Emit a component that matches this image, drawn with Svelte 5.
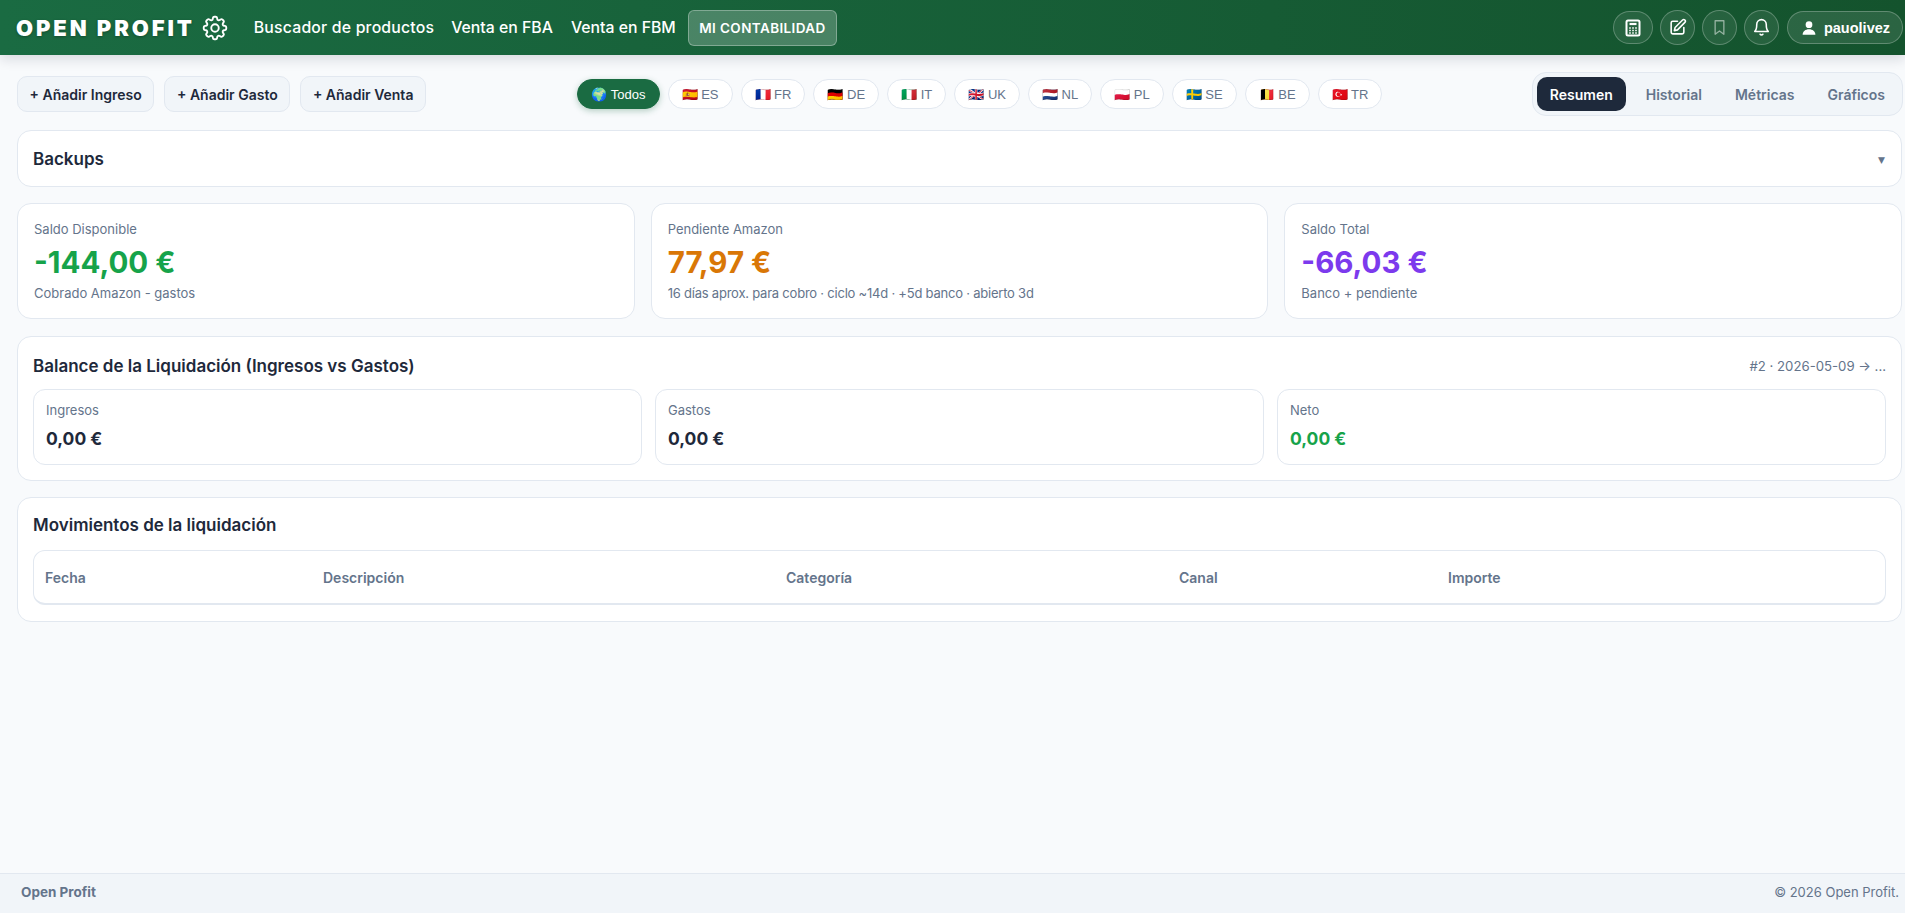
<script>
  const flags = [
    ['🇪🇸', 'ES'], ['🇫🇷', 'FR'], ['🇩🇪', 'DE'], ['🇮🇹', 'IT'], ['🇬🇧', 'UK'],
    ['🇳🇱', 'NL'], ['🇵🇱', 'PL'], ['🇸🇪', 'SE'], ['🇧🇪', 'BE'], ['🇹🇷', 'TR']
  ];
  const tabs = ['Resumen', 'Historial', 'Métricas', 'Gráficos'];
  const stats = [
    { label: 'Saldo Disponible', value: '-144,00 €', sub: 'Cobrado Amazon - gastos', cls: 'green', tight: false },
    { label: 'Pendiente Amazon', value: '77,97 €', sub: '16 días aprox. para cobro · ciclo ~14d · +5d banco · abierto 3d', cls: 'orange', tight: true },
    { label: 'Saldo Total', value: '-66,03 €', sub: 'Banco + pendiente', cls: 'purple', tight: false }
  ];
  const balance = [
    { label: 'Ingresos', value: '0,00 €', cls: '' },
    { label: 'Gastos', value: '0,00 €', cls: '' },
    { label: 'Neto', value: '0,00 €', cls: 'green' }
  ];
</script>

<div class="page">
  <header class="top">
    <div class="brand">OPEN PROFIT</div>
    <svg class="gear" viewBox="0 0 24 24" fill="none" stroke="currentColor" stroke-width="1.5" stroke-linecap="round" stroke-linejoin="round"><path d="M10.343 3.94c.09-.542.56-.94 1.11-.94h1.093c.55 0 1.02.398 1.11.94l.149.894c.07.424.384.764.78.93.398.164.855.142 1.205-.108l.737-.527a1.125 1.125 0 0 1 1.45.12l.773.774c.39.389.44 1.002.12 1.45l-.527.737c-.25.35-.272.806-.107 1.204.165.397.505.71.93.78l.893.15c.543.09.94.559.94 1.109v1.094c0 .55-.397 1.02-.94 1.11l-.894.149c-.424.07-.764.383-.929.78-.165.398-.143.854.107 1.204l.527.738c.32.447.269 1.06-.12 1.45l-.774.773a1.125 1.125 0 0 1-1.449.12l-.738-.527c-.35-.25-.806-.272-1.203-.107-.398.165-.71.505-.781.929l-.149.894c-.09.542-.56.94-1.11.94h-1.094c-.55 0-1.019-.398-1.11-.94l-.148-.894c-.071-.424-.384-.764-.781-.93-.398-.164-.854-.142-1.204.108l-.738.527c-.447.32-1.06.269-1.45-.12l-.773-.774a1.125 1.125 0 0 1-.12-1.45l.527-.737c.25-.35.272-.806.108-1.204-.165-.397-.506-.71-.93-.78l-.894-.15c-.542-.09-.94-.56-.94-1.109v-1.094c0-.55.398-1.02.94-1.11l.894-.149c.424-.07.765-.383.93-.78.165-.398.143-.854-.108-1.204l-.526-.738a1.125 1.125 0 0 1 .12-1.45l.773-.773a1.125 1.125 0 0 1 1.45-.12l.737.527c.35.25.807.272 1.204.107.397-.165.71-.505.78-.929l.15-.894Z"/><circle cx="12" cy="12" r="3"/></svg>
    <nav class="nav">
      <span class="nav-first">Buscador de productos</span>
      <span>Venta en FBA</span>
      <span>Venta en FBM</span>
      <span class="nav-active">MI CONTABILIDAD</span>
    </nav>
    <div class="actions">
      <span class="act calc">
        <svg viewBox="0 0 24 24" fill="none" stroke="currentColor" stroke-width="2" stroke-linecap="round" stroke-linejoin="round"><rect x="5.500" y="4.500" width="13" height="15" rx="1.500"/><path d="M8.500 8h7" stroke-width="2.200" stroke-linecap="butt"/><path d="M9 12h.01M12 12h.01M15 12h.01M9 14.500h.01M12 14.500h.01M15 14.500h.01M9 17h.01M12 17h.01M15 17h.01" stroke-width="1.600" stroke-linecap="square"/></svg>
      </span>
      <span class="act">
        <svg viewBox="0 0 24 24" fill="none" stroke="currentColor" stroke-width="2" stroke-linecap="round" stroke-linejoin="round"><path d="M12 4H6a2 2 0 0 0-2 2v12a2 2 0 0 0 2 2h12a2 2 0 0 0 2-2v-6"/><path d="M18.400 2.600a2 2 0 0 1 2.900 2.900L12 15l-4 1 1-4Z"/></svg>
      </span>
      <span class="act dim">
        <svg viewBox="0 0 24 24" fill="none" stroke="currentColor" stroke-width="1.700" stroke-linecap="round" stroke-linejoin="round"><path d="M6.500 3.500h11v17L12 16.500l-5.500 4Z"/></svg>
      </span>
      <span class="act">
        <svg viewBox="0 0 24 24" fill="none" stroke="currentColor" stroke-width="2" stroke-linecap="round" stroke-linejoin="round"><path d="M6 8a6 6 0 0 1 12 0c0 7 2.500 9 2.500 9h-17S6 15 6 8"/><path d="M10.300 20.500a2 2 0 0 0 3.400 0"/></svg>
      </span>
      <span class="user">
        <svg viewBox="0 0 24 24" fill="currentColor"><circle cx="12" cy="7.500" r="4.500"/><path d="M3.500 21c0-4.700 3.800-7.500 8.500-7.500s8.500 2.800 8.500 7.500Z"/></svg>
        pauolivez
      </span>
    </div>
  </header>

  <main class="main">
    <div class="toolbar">
      <div class="adds">
        <button>+ Añadir Ingreso</button>
        <button>+ Añadir Gasto</button>
        <button>+ Añadir Venta</button>
      </div>
      <div class="flags">
        <span class="flag on">🌍 Todos</span>
        {#each flags as f}
          <span class="flag">{f[0]} {f[1]}</span>
        {/each}
      </div>
      <div class="tabs">
        {#each tabs as t, i}
          <span class="tab" class:active={i === 0}>{t}</span>
        {/each}
      </div>
    </div>

    <section class="card backups">
      <h2>Backups</h2>
      <span class="caret">▼</span>
    </section>

    <div class="stats">
      {#each stats as s}
        <div class="card stat">
          <div class="stat-label">{s.label}</div>
          <div class="stat-value {s.cls}">{s.value}</div>
          <div class="stat-sub" class:tight={s.tight}>{s.sub}</div>
        </div>
      {/each}
    </div>

    <section class="card panel">
      <div class="panel-head">
        <h2>Balance de la Liquidación (Ingresos vs Gastos)</h2>
        <span class="period">#2 · 2026-05-09 → ...</span>
      </div>
      <div class="balance">
        {#each balance as b}
          <div class="mini">
            <div class="mini-label">{b.label}</div>
            <div class="mini-value {b.cls}">{b.value}</div>
          </div>
        {/each}
      </div>
    </section>

    <section class="card panel moves">
      <h2>Movimientos de la liquidación</h2>
      <div class="table-wrap">
        <table>
          <thead>
            <tr>
              <th class="c1">Fecha</th>
              <th class="c2">Descripción</th>
              <th class="c3">Categoría</th>
              <th class="c4">Canal</th>
              <th class="c5">Importe</th>
            </tr>
          </thead>
        </table>
      </div>
    </section>
  </main>

  <footer class="foot">
    <span class="foot-brand">Open Profit</span>
    <span class="foot-copy">© 2026 Open Profit.</span>
  </footer>
</div>

<style>
  :global(body) {
    margin: 0;
    background: #f8fafc;
    color: #1e293b;
    font-family: Inter, "Noto Sans", sans-serif;
  }
  .page {
    min-height: 913px;
    display: flex;
    flex-direction: column;
    box-sizing: border-box;
  }
  .top {
    height: 55px;
    box-sizing: border-box;
    display: flex;
    align-items: center;
    padding: 0 2px 0 16px;
    background: linear-gradient(90deg, #1a6b42, #14532d);
    box-shadow: 0 4px 12px rgba(15, 23, 42, 0.14);
    color: #fff;
  }
  .brand {
    font-size: 22px;
    font-weight: 900;
    letter-spacing: 2.900px;
    white-space: nowrap;
    text-shadow: 0 1px 3px rgba(0, 0, 0, 0.3);
  }
  .gear { width: 30px; height: 30px; margin-left: 5px; flex: none; }
  .nav {
    display: flex;
    align-items: center;
    gap: 18px;
    margin-left: 24px;
    font-size: 15.800px;
    font-weight: 500;
    white-space: nowrap;
  }
  .nav-first { letter-spacing: 0.2px; margin-right: -1px; }
  .nav-active {
    height: 36px;
    box-sizing: border-box;
    display: flex;
    align-items: center;
    padding: 0 10.500px;
    margin-left: -6px;
    font-size: 13.500px;
    font-weight: 600;
    letter-spacing: 0.4px;
    background: rgba(255, 255, 255, 0.22);
    border: 1px solid rgba(255, 255, 255, 0.3);
    border-radius: 6px;
  }
  .actions { margin-left: auto; display: flex; align-items: center; gap: 7px; }
  .act {
    width: 35px;
    height: 35px;
    box-sizing: border-box;
    display: flex;
    align-items: center;
    justify-content: center;
    border-radius: 50%;
    background: rgba(255, 255, 255, 0.08);
    border: 1px solid rgba(255, 255, 255, 0.25);
  }
  .act svg { width: 19px; height: 19px; }
  .act.calc { width: 40px; height: 33px; border-radius: 17px; }
  .act.calc svg { width: 24px; height: 24px; }
  .act.dim { color: rgba(255, 255, 255, 0.5); }
  .user {
    width: 116px;
    height: 33px;
    box-sizing: border-box;
    margin-left: 1px;
    display: flex;
    align-items: center;
    justify-content: center;
    gap: 6px;
    border-radius: 17px;
    background: rgba(255, 255, 255, 0.1);
    border: 1px solid rgba(255, 255, 255, 0.25);
    font-family: "Liberation Sans", Arial, sans-serif;
    font-weight: 700;
    font-size: 14.500px;
  }
  .user svg { width: 18px; height: 18px; }
  .main {
    flex: 1;
    box-sizing: border-box;
    padding: 17px 3px 0 17px;
    display: flex;
    flex-direction: column;
  }
  .toolbar {
    display: flex;
    align-items: center;
    justify-content: space-between;
    height: 44px;
    margin: 0 -1px 14px 0;
  }
  .adds { display: flex; gap: 10px; }
  .adds button {
    height: 36px;
    padding: 0 11.600px;
    box-sizing: border-box;
    background: #f1f5f9;
    border: 1px solid #e2e8f0;
    border-radius: 10px;
    font: 600 14px Inter, sans-serif;
    color: #1e293b;
  }
  .flags { display: flex; gap: 8px; margin-left: 2px; }
  .flag {
    height: 30px;
    box-sizing: border-box;
    display: flex;
    align-items: center;
    padding: 0 13px;
    background: #fff;
    border: 1px solid #e2e8f0;
    border-radius: 15px;
    font-family: "Liberation Sans", Arial, sans-serif;
    font-size: 13px;
    color: #64748b;
    white-space: pre;
  }
  .flag.on {
    background: #1a6b42;
    border-color: #1a6b42;
    color: #fff;
    box-shadow: 0 2px 6px rgba(26, 107, 66, 0.3);
  }
  .tabs {
    display: flex;
    gap: 7px;
    height: 44px;
    box-sizing: border-box;
    padding: 4px;
    background: #f1f5f9;
    border: 1px solid #e2e8f0;
    border-radius: 14px;
  }
  .tab {
    display: flex;
    align-items: center;
    padding: 0 13px;
    border-radius: 10px;
    font-size: 14px;
    font-weight: 600;
    color: #64748b;
  }
  .tab.active { background: #1e293b; color: #fff; }
  .card {
    background: #fff;
    border: 1px solid #e2e8f0;
    border-radius: 14px;
    box-sizing: border-box;
  }
  h2 { margin: 0; font-size: 17px; font-weight: 600; color: #1e293b; }
  .backups {
    height: 57px;
    display: flex;
    align-items: center;
    justify-content: space-between;
    padding: 0 16px 0 15px;
    margin-bottom: 16px;
  }
  .caret {
    font-family: "DejaVu Sans", sans-serif;
    font-size: 9px;
    color: #64748b;
    margin-top: 3px;
  }
  .stats { display: grid; grid-template-columns: repeat(3, 1fr); gap: 16px; margin-bottom: 17px; }
  .stat { height: 116px; padding: 17px 16px 0; }
  .stat-label { font-size: 13px; color: #64748b; line-height: 16px; }
  .stat-value { font-size: 29.500px; font-weight: 700; line-height: 36px; margin-top: 7px; }
  .stat-sub { font-size: 13px; color: #64748b; line-height: 16px; margin-top: 5px; }
  .stat-sub.tight { letter-spacing: -0.22px; }
  .green { color: #16a34a; }
  .orange { color: #d97706; }
  .purple { color: #7c3aed; }
  .panel { padding: 0 15px; }
  .panel-head {
    display: flex;
    justify-content: space-between;
    align-items: center;
    height: 52px;
    box-sizing: border-box;
    padding-top: 5px;
  }
  .period { font-size: 13.200px; color: #64748b; }
  .balance { display: grid; grid-template-columns: repeat(3, 1fr); gap: 13px; padding-bottom: 15px; }
  .mini {
    height: 76px;
    box-sizing: border-box;
    padding: 12px 12px 0;
    border: 1px solid #e2e8f0;
    border-radius: 12px;
  }
  .mini-label { font-size: 13px; color: #64748b; line-height: 16px; }
  .mini-value { font-size: 17.500px; font-weight: 700; line-height: 22px; margin-top: 10px; }
  .moves { margin-top: 16px; height: 125px; }
  .moves h2 { padding-top: 3px; height: 49px; line-height: 49px; }
  .table-wrap {
    border: 1px solid #e2e8f0;
    border-bottom-width: 2px;
    border-radius: 12px;
    overflow: hidden;
  }
  table { width: 100%; border-collapse: collapse; table-layout: fixed; }
  th {
    box-sizing: border-box;
    height: 52px;
    padding: 0 0 0 11px;
    text-align: left;
    font-size: 14px;
    font-weight: 600;
    color: #64748b;
  }
  .c1 { width: 278px; }
  .c2 { width: 463px; }
  .c3 { width: 393px; }
  .c4 { width: 269px; }
  .foot {
    height: 40px;
    box-sizing: border-box;
    display: flex;
    align-items: center;
    justify-content: space-between;
    padding: 0 6px 3px 21px;
    background: #f1f5f9;
    border-top: 1px solid #e2e8f0;
    font-size: 13px;
    color: #64748b;
  }
  .foot-brand { font-weight: 700; font-size: 13.500px; }
</style>
